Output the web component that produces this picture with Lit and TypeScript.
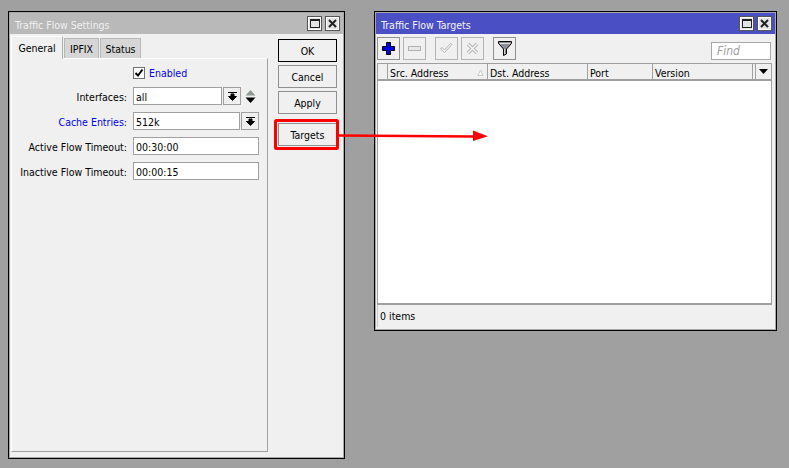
import { LitElement, html, css, svg } from "lit";
import { customElement } from "lit/decorators.js";

const dropIcon = svg`<svg width="9" height="9" viewBox="0 0 9 9"><path d="M0 0.5H9M3 2H6V4.5H8.5L4.5 8.5 0.5 4.5H3Z" fill="#000" stroke="#000" stroke-width="1"/></svg>`;

@customElement("app-root")
export class AppRoot extends LitElement {
  static styles = css`
    :host { display: block; width: 789px; height: 468px; background: #a0a0a0; position: relative; overflow: hidden;
      font-family: "DejaVu Sans Condensed", "Liberation Sans", sans-serif; font-size: 10.5px; color: #000; }
    * { box-sizing: border-box; }
    .win { position: absolute; top: 11px; border: 1px solid #000; background: #f0f0f0; display: flex; flex-direction: column; padding: 1px; box-shadow: inset 0 0 0 1px #a8a8a8; }
    .w1 { left: 8px; width: 337px; height: 448px; }
    .w2 { left: 374px; width: 403px; height: 320px; }
    .title { height: 21px; flex: none; display: flex; align-items: center; padding: 0 3px 0 5px; }
    .w1 .title { background: #b9b9b9; color: #f0f0f0; }
    .w2 .title { background: #4a4fc4; color: #f4f4f4; }
    .title span { flex: 1; padding-top: 2px; }
    .tb { width: 15px; height: 15px; border: 1px solid #555; background: #e4e4e4; display: flex; align-items: center; justify-content: center; margin-left: 3px; box-shadow: inset 0 0 0 1px #fff; }
    .body1 { flex: 1; display: flex; padding: 2px 6px 5px 1px; }
    .left { width: 257px; flex: none; display: flex; flex-direction: column; }
    .tabs { display: flex; align-items: flex-end; height: 22px; gap: 1px; position: relative; z-index: 1; }
    .tab { height: 20px; border: 1px solid #b8b8b8; border-bottom: 0; background: #d6d6d6; display: flex; align-items: center; justify-content: center; padding-top: 1px; }
    .tab.on { height: 23px; width: 52px; background: #f0f0f0; border: 1px solid #fff; border-bottom: 0; border-right-color: #b0b0b0; margin-bottom: -1px; padding-top: 0; }
    .tab.ipfix { width: 35px; }
    .tab.stat { width: 41px; }
    .panel { flex: 1; border: 1px solid #fff; border-right-color: #a0a0a0; border-bottom-color: #a0a0a0; padding: 6px 8px 0 0; }
    .chk-row { display: flex; align-items: center; padding-left: 121px; height: 15px; margin-bottom: 7px; color: #0000ee; gap: 4px; }
    .chk { width: 12px; height: 12px; border: 1px solid #707070; background: #fff; display: flex; align-items: center; justify-content: center; }
    .row { display: grid; grid-template-columns: 115px 1fr; column-gap: 6px; height: 18px; margin-bottom: 7px; align-items: center; }
    .row label { text-align: right; white-space: nowrap; padding-top: 1px; }
    .blue { color: #0000ee; }
    .ctrl { display: flex; height: 18px; align-items: stretch; }
    .in { flex: 1; min-width: 0; border: 1px solid #a0a0a0; background: #fff; display: flex; align-items: center; padding: 1px 0 0 2px; }
    .dd { width: 18px; margin-left: 1px; border: 1px solid #a0a0a0; background: #f0f0f0; display: flex; align-items: center; justify-content: center; }
    .updown { width: 18px; display: flex; align-items: center; justify-content: center; }
    .side { flex: 1; display: flex; flex-direction: column; gap: 3px; padding: 3px 0 0 10px; }
    .btn { height: 23px; width: 59px; border: 1px solid #909090; background: #f0f0f0; display: flex; align-items: center; justify-content: center; flex: none; }
    .btn.def { border: 1px solid #000; }
    .btn.tg { margin-top: 6px; }
    .toolbar { height: 29px; flex: none; display: flex; align-items: center; padding: 0 4px 0 1px; }
    .tool { width: 23px; height: 23px; border: 1px solid #909090; background: #f0f0f0; display: flex; align-items: center; justify-content: center; margin-right: 3px; }
    .tool.dis { border-color: #b4b4b4; }
    .g1 { margin-right: 9px; }
    .find { margin-left: auto; margin-top: 5px; width: 60px; height: 18px; border: 1px solid #a8a8a8; background: #fff; color: #a0a0a0; font-style: italic; display: flex; align-items: center; padding-left: 5px; font-size: 12px; }
    .tablewrap { flex: 1; margin: 0 3px 0 1px; display: flex; flex-direction: column; min-height: 0; }
    .thead { height: 18px; flex: none; display: grid; grid-template-columns: 10px 100px 100px 65px 100px 3px 1fr; border: 1px solid #a0a0a0; border-bottom: 2px solid #a0a0a0; }
    .th { border-right: 1px solid #a0a0a0; display: flex; align-items: center; padding: 2px 0 0 2px; justify-content: space-between; }
    .th:last-child { border-right: 0; justify-content: center; padding: 0; }
    .tbody { flex: 1; background: #fff; border: 1px solid #a0a0a0; border-top: 0; border-bottom: 2px solid #a0a0a0; }
    .statusbar { height: 22px; flex: none; display: flex; align-items: center; padding-left: 2px; margin: 0 3px 2px 1px; border-left: 1px solid #c8c8c8; }
    .overlay { position: absolute; left: 0; top: 0; pointer-events: none; }
    .sort { margin-right: 3px; }
  `;

  render() {
    return html`
      <div class="win w1">
        <div class="title"><span>Traffic Flow Settings</span>${this.winBtns()}</div>
        <div class="body1">
          <div class="left">
            <div class="tabs">
              <div class="tab on">General</div><div class="tab ipfix">IPFIX</div><div class="tab stat">Status</div>
            </div>
            <div class="panel">
              <div class="chk-row"><div class="chk"><svg width="10" height="10" viewBox="0 0 10 10"><path d="M1.5 5 4 7.5 8.5 1.5" fill="none" stroke="#000" stroke-width="2"/></svg></div>Enabled</div>
              <div class="row"><label>Interfaces:</label><div class="ctrl"><div class="in">all</div><div class="dd">${dropIcon}</div><div class="updown"><svg width="11" height="15" viewBox="0 0 11 15"><path d="M5.5 1 10.5 6.500H.5Z" fill="#8f9a92"/><path d="M.5 8.500H10.500L5.500 14Z" fill="#000"/></svg></div></div></div>
              <div class="row"><label class="blue">Cache Entries:</label><div class="ctrl"><div class="in">512k</div><div class="dd">${dropIcon}</div></div></div>
              <div class="row"><label>Active Flow Timeout:</label><div class="ctrl"><div class="in">00:30:00</div></div></div>
              <div class="row"><label>Inactive Flow Timeout:</label><div class="ctrl"><div class="in">00:00:15</div></div></div>
            </div>
          </div>
          <div class="side">
            <div class="btn def">OK</div><div class="btn">Cancel</div><div class="btn">Apply</div><div class="btn tg">Targets</div>
          </div>
        </div>
      </div>

      <div class="win w2">
        <div class="title"><span>Traffic Flow Targets</span>${this.winBtns()}</div>
        <div class="toolbar">
          <div class="tool"><svg width="13" height="13" viewBox="0 0 13 13"><path d="M4.500 .5H8.500V4.500H12.500V8.500H8.500V12.500H4.500V8.500H.5V4.500H4.500Z" fill="#0000e6" stroke="#000"/></svg></div>
          <div class="tool dis g1"><svg width="15" height="7" viewBox="0 0 15 7"><rect x="1.500" y="1.500" width="12" height="4" fill="#e8e8e8" stroke="#b0b0b0"/></svg></div>
          <div class="tool dis"><svg width="15" height="13" viewBox="0 0 15 13"><path d="M1.500 7 5.500 10.500 13 2.500 11.500 1.500 5.500 8 3 5.500Z" fill="#f4f4f4" stroke="#b4b4b4"/></svg></div>
          <div class="tool dis g1"><svg width="13" height="13" viewBox="0 0 13 13"><path d="M2 2 11 11M11 2 2 11" fill="none" stroke="#b4b4b4" stroke-width="3.500"/><path d="M2 2 11 11M11 2 2 11" fill="none" stroke="#f4f4f4" stroke-width="1.500"/></svg></div>
          <div class="tool"><svg width="14" height="15" viewBox="0 0 14 15"><path d="M.5 .5H13.500V2.500L8.500 8V13L5.500 14.500V8L.5 2.500Z" fill="#8a8f96" stroke="#000"/><path d="M2 2.500H12" stroke="#e0e0e0"/><path d="M6.500 8V13" stroke="#d0d0d0"/></svg></div>
          <div class="find">Find</div>
        </div>
        <div class="tablewrap">
          <div class="thead">
            <div class="th"></div>
            <div class="th">Src. Address<svg class="sort" width="7" height="7" viewBox="0 0 7 7"><path d="M3.500 1 6 6.500H1Z" fill="#fff" stroke="#c8c8c8"/></svg></div>
            <div class="th">Dst. Address</div>
            <div class="th">Port</div>
            <div class="th">Version</div>
            <div class="th"></div>
            <div class="th"><svg width="9" height="5" viewBox="0 0 9 5"><path d="M0 0H9L4.500 5Z" fill="#000"/></svg></div>
          </div>
          <div class="tbody"></div>
        </div>
        <div class="statusbar">0 items</div>
      </div>

      <svg class="overlay" width="789" height="468" viewBox="0 0 789 468">
        <rect x="275.500" y="120.500" width="62" height="28" rx="1" fill="none" stroke="#ff0000" stroke-width="3"/>
        <path d="M338 135.500 474 136.500" stroke="#ff0000" stroke-width="2.400" fill="none"/>
        <path d="M473 130.500 488 136.300 473 141Z" fill="#ff0000"/>
      </svg>
    `;
  }

  winBtns() {
    return html`
      <div class="tb"><svg width="10" height="9" viewBox="0 0 10 9"><rect x=".5" y=".5" width="9" height="8" fill="none" stroke="#222"/><path d="M0 1.500H10" stroke="#222"/></svg></div>
      <div class="tb"><svg width="9" height="9" viewBox="0 0 9 9"><path d="M1 1 8 8M8 1 1 8" stroke="#222" stroke-width="2"/></svg></div>`;
  }
}
